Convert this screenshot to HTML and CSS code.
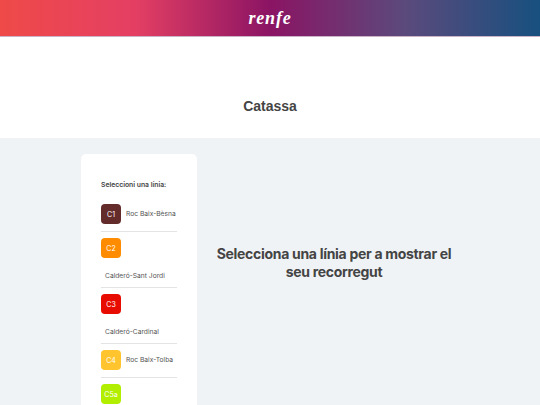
FILE: index.html
```html
<!DOCTYPE html>
<html lang="ca">
<head>
    <meta charset="UTF-8">
    <title>Catassa</title>
    <link rel="stylesheet" href="styles.css">
</head>
<body>
    <header class="topbar">
        <span class="logo">renfe</span>
    </header>

    <section class="station">
        <h1>Catassa</h1>
    </section>

    <main class="content">
        <aside class="card">
            <p class="card-title">Seleccioni una línia:</p>
            <ul class="lines">
                <li class="line">
                    <span class="badge c1">C1</span>
                    <span class="name">Roc Baix-Bèsna</span>
                </li>
                <li class="line">
                    <span class="badge c2">C2</span>
                    <span class="name wrapped">Calderó-Sant Jordi</span>
                </li>
                <li class="line">
                    <span class="badge c3">C3</span>
                    <span class="name wrapped">Calderó-Cardinal</span>
                </li>
                <li class="line">
                    <span class="badge c4">C4</span>
                    <span class="name">Roc Baix-Tolba</span>
                </li>
                <li class="line">
                    <span class="badge c5a">C5a</span>
                </li>
            </ul>
        </aside>
        <div class="empty">
            <h2>Selecciona una línia per a mostrar el seu recorregut</h2>
        </div>
    </main>
</body>
</html>
```

FILE: styles.css
```css
body {
    margin: 0;
    height: 405px;
    overflow: hidden;
    font-family: "Inter", "Liberation Sans", sans-serif;
    color: #444;
    background-color: #f0f3f6;
}

/* Cabecera */
.topbar {
    height: 36px;
    display: flex;
    align-items: center;
    justify-content: center;
    background: linear-gradient(90deg, #ef4a48 0%, #e43f63 25%, #8b1464 50%, #5b4a7c 75%, #17507f 100%);
    border-bottom: 1px solid #c9b3c6;
}
.logo {
    padding-top: 1px;
    font-family: "Liberation Serif", serif;
    font-style: italic;
    font-weight: bold;
    font-size: 18px;
    letter-spacing: 0.8px;
    color: #fff;
}

.station {
    height: 101px;
    background-color: #fff;
    display: flex;
    justify-content: center;
}
.station h1 {
    margin: 60px 0 0;
    font-family: "Liberation Sans", sans-serif;
    font-size: 14px;
    line-height: 18px;
    font-weight: bold;
}

.content {
    display: flex;
    padding: 16px 0 0 81px;
}

.card {
    width: 76px;
    height: 225px;
    padding: 26px 20px 0;
    background-color: #fff;
    border-radius: 5px 5px 0 0;
}
.card-title {
    margin: 0 0 14px;
    font-size: 6.8px;
    line-height: 10px;
    font-weight: 600;
}

.lines {
    list-style: none;
    margin: 0;
    padding: 0;
}
.line {
    display: flex;
    flex-wrap: wrap;
    align-items: center;
    padding-bottom: 7px;
    margin-bottom: 6px;
    border-bottom: 1px solid #e3e3e3;
}
.line:last-child {
    border-bottom: none;
    padding-bottom: 0;
    margin-bottom: 0;
}
.badge {
    width: 20px;
    height: 20px;
    border-radius: 4px;
    display: flex;
    align-items: center;
    justify-content: center;
    font-size: 7px;
    color: #fff;
}
.c1 { background-color: #642b2b; }
.c2 { background-color: #ff8c00; }
.c3 { background-color: #e80c00; }
.c4 { background-color: #ffc42e; }
.c5a { background-color: #b1ee00; }

.name {
    margin-left: 5px;
    font-size: 6.7px;
    line-height: 10px;
    color: #555;
    white-space: nowrap;
}
.name.wrapped {
    flex-basis: 100%;
    margin: 13px 0 -1px;
    padding-left: 4px;
}

.empty {
    width: 274px;
    padding-top: 91px;
}
.empty h2 {
    margin: 0;
    padding: 0 18px;
    text-align: center;
    font-size: 14px;
    line-height: 18px;
    font-weight: 700;
    letter-spacing: -0.3px;
}
```
